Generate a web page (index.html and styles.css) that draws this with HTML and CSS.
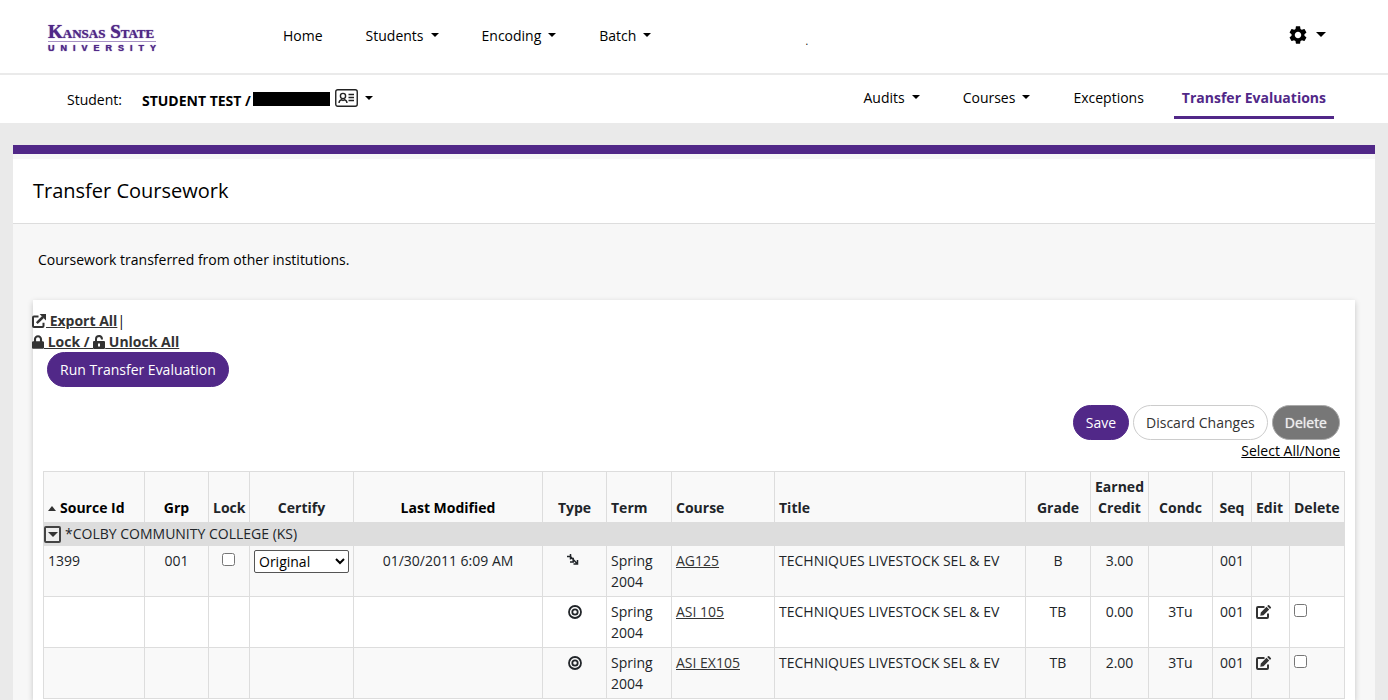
FILE: index.html
```html
<!DOCTYPE html>
<html lang="en">

<head>
    <meta charset="UTF-8">
    <meta name="viewport" content="width=device-width, initial-scale=1.0">
    <title>Transfer Coursework</title>
    <link rel="stylesheet" href="styles.css">
</head>

<body>
    <!-- shared icons -->
    <svg class="sprite" xmlns="http://www.w3.org/2000/svg" aria-hidden="true">
        <symbol id="icon-export" viewBox="0 0 14 14">
            <path d="M6.5 2.5H2Q1 2.5 1 3.5V12q0 1 1 1h8.500q1 0 1-1V8.800" fill="none" stroke="currentColor" stroke-width="2" />
            <path d="M4.800 9.200L11 3" fill="none" stroke="currentColor" stroke-width="2.500" />
            <path d="M7.600 0H14v6.400z" fill="currentColor" />
        </symbol>
        <symbol id="icon-lock" viewBox="0 0 448 512">
            <path fill="currentColor" d="M400 224h-24v-72C376 68.2 307.8 0 224 0S72 68.2 72 152v72H48c-26.5 0-48 21.5-48 48v192c0 26.5 21.5 48 48 48h352c26.5 0 48-21.5 48-48V272c0-26.5-21.5-48-48-48zm-104 0H152v-72c0-39.7 32.3-72 72-72s72 32.3 72 72v72z" />
        </symbol>
        <symbol id="icon-unlock" viewBox="0 0 12 14">
            <path d="M3 7V4q0-3 3.200-3Q9 1 9 4.500" fill="none" stroke="currentColor" stroke-width="2" />
            <path fill="currentColor" fill-rule="evenodd" d="M1 6h10q1 0 1 1v6q0 1-1 1H1q-1 0-1-1V7q0-1 1-1zM5 8.500v3h2v-3z" />
        </symbol>
        <symbol id="icon-edit" viewBox="0 0 16 14">
            <path d="M8.500 2H2Q1 2 1 3v9q0 1 1 1h9q1 0 1-1V8.500" fill="none" stroke="currentColor" stroke-width="2" />
            <path d="M4.300 10.700l.5-3.200 5.700-5.700 2.700 2.700-5.700 5.700zM11.200 1.100l.8-.8q.6-.6 1.200 0l1.600 1.600q.6.600 0 1.200l-.8.8z" fill="currentColor" />
        </symbol>
        <symbol id="icon-target" viewBox="0 0 14 14">
            <circle cx="7" cy="7" r="6" fill="none" stroke="currentColor" stroke-width="1.800" />
            <circle cx="7" cy="7" r="2.700" fill="none" stroke="currentColor" stroke-width="1.800" />
        </symbol>
        <symbol id="icon-arrows" viewBox="0 0 16 14">
            <path d="M0 2.500h4.500M3.500 0v5.500M2.500 1.500l7.500 8M6.200 3.800v4.200H3M10.500 6v4H6.500" fill="none" stroke="currentColor" stroke-width="1.500" />
        </symbol>
    </svg>

    <header class="header">
        <a class="logo" href="#" aria-label="Kansas State University">
            <span class="logo-name">K<small>ANSAS</small> S<small>TATE</small></span>
            <span class="logo-sub">UNIVERSITY</span>
        </a>
        <nav class="nav">
            <a href="#">Home</a>
            <a href="#">Students<i class="caret"></i></a>
            <a href="#">Encoding<i class="caret"></i></a>
            <a href="#">Batch<i class="caret"></i></a>
        </nav>
        <span class="dot">.</span>
        <button class="settings" type="button" aria-label="Settings">
            <svg width="18" height="18" viewBox="2 2 20 20"><path d="M19.140 12.940c.04-.3.060-.610.060-.940 0-.320-.020-.640-.070-.940l2.030-1.580c.180-.140.230-.410.120-.610l-1.920-3.320c-.120-.220-.370-.290-.590-.220l-2.390.960c-.5-.380-1.030-.7-1.620-.940l-.360-2.540c-.040-.240-.240-.410-.480-.410h-3.840c-.240 0-.430.170-.470.410l-.360 2.540c-.590.240-1.130.570-1.620.940l-2.390-.960c-.220-.080-.470 0-.590.220L2.740 8.870c-.120.210-.080.470.120.610l2.030 1.580c-.050.3-.090.630-.090.940s.020.640.070.940l-2.030 1.580c-.180.140-.230.410-.120.610l1.920 3.320c.120.220.370.290.590.220l2.390-.960c.5.380 1.030.7 1.620.940l.360 2.540c.050.240.240.410.480.410h3.840c.240 0 .440-.170.470-.410l.360-2.540c.590-.240 1.130-.560 1.620-.940l2.390.960c.220.080.470 0 .590-.220l1.920-3.320c.120-.220.070-.470-.120-.610l-2.010-1.580zM12 15.600c-1.980 0-3.600-1.620-3.600-3.600s1.620-3.600 3.600-3.600 3.600 1.620 3.600 3.600-1.620 3.600-3.600 3.600z" /></svg>
            <i class="caret caret-lg"></i>
        </button>
    </header>

    <div class="subbar">
        <span class="student-label">Student:</span>
        <strong class="student-name">STUDENT TEST /</strong>
        <span class="redacted"></span>
        <button class="student-card" type="button" aria-label="Student details">
            <svg width="23" height="18" viewBox="0 0 23 18" fill="none" stroke="#222">
                <rect x=".75" y=".75" width="21.500" height="16.500" rx="2" stroke-width="1.400" />
                <circle cx="8" cy="7" r="2.600" stroke-width="1.400" />
                <path d="M4 14q.3-3 2.600-3.300l1.400.8 1.400-.8q2.300.3 2.600 3.300M13.500 5.500H19M13.500 8.500H19M13.500 11.500H19" stroke-width="1.400" />
            </svg>
            <i class="caret"></i>
        </button>
        <nav class="tabs">
            <a href="#">Audits<i class="caret"></i></a>
            <a href="#">Courses<i class="caret"></i></a>
            <a href="#">Exceptions</a>
            <a class="active" href="#">Transfer Evaluations</a>
        </nav>
    </div>

    <main class="main">
        <h1 class="title">Transfer Coursework</h1>
        <p class="intro">Coursework transferred from other institutions.</p>

        <section class="card">
            <div class="tools">
                <div><a href="#"><svg class="icon" width="14" height="14"><use href="#icon-export" /></svg> Export All</a>|</div>
                <div><a href="#"><svg class="icon" width="12" height="14"><use href="#icon-lock" /></svg> Lock / <svg class="icon" width="12" height="14"><use href="#icon-unlock" /></svg> Unlock All</a></div>
            </div>
            <button class="btn btn-primary btn-run" type="button">Run Transfer Evaluation</button>

            <div class="actions">
                <button class="btn btn-primary" type="button">Save</button>
                <button class="btn" type="button">Discard Changes</button>
                <button class="btn btn-disabled" type="button">Delete</button>
            </div>
            <div class="select-all"><a href="#">Select All/None</a></div>

            <table class="courses">
                <colgroup>
                    <col class="w-source">
                    <col class="w-mid">
                    <col class="w-lock">
                    <col class="w-certify">
                    <col class="w-modified">
                    <col class="w-mid">
                    <col class="w-term">
                    <col class="w-course">
                    <col>
                    <col class="w-term">
                    <col class="w-credit">
                    <col class="w-mid">
                    <col class="w-seq">
                    <col class="w-edit">
                    <col class="w-delete">
                </colgroup>
                <thead>
                    <tr>
                        <th class="sorted"><i class="sort-up"></i>Source Id</th>
                        <th class="center sorted">Grp</th>
                        <th class="center">Lock</th>
                        <th class="center">Certify</th>
                        <th class="center sorted">Last Modified</th>
                        <th class="center">Type</th>
                        <th>Term</th>
                        <th>Course</th>
                        <th>Title</th>
                        <th class="center">Grade</th>
                        <th class="center">Earned Credit</th>
                        <th class="center">Condc</th>
                        <th class="center">Seq</th>
                        <th>Edit</th>
                        <th>Delete</th>
                    </tr>
                </thead>
                <tbody>
                    <tr class="group">
                        <td colspan="15">
                            <div class="group-name">
                                <button class="toggle" type="button" aria-label="Collapse"><i class="caret caret-lg"></i></button>
                                *COLBY COMMUNITY COLLEGE (KS)
                            </div>
                        </td>
                    </tr>
                    <tr class="odd">
                        <td>1399</td>
                        <td class="center">001</td>
                        <td class="center"><input type="checkbox" aria-label="Lock"></td>
                        <td><select aria-label="Certify"><option>Original</option></select></td>
                        <td class="center">01/30/2011 6:09 AM</td>
                        <td class="center"><svg class="icon" width="16" height="14"><use href="#icon-arrows" /></svg></td>
                        <td>Spring 2004</td>
                        <td><a href="#">AG125</a></td>
                        <td>TECHNIQUES LIVESTOCK SEL &amp; EV</td>
                        <td class="center">B</td>
                        <td class="center">3.00</td>
                        <td></td>
                        <td class="center">001</td>
                        <td></td>
                        <td></td>
                    </tr>
                    <tr>
                        <td></td>
                        <td></td>
                        <td></td>
                        <td></td>
                        <td></td>
                        <td class="center"><svg class="icon" width="14" height="14"><use href="#icon-target" /></svg></td>
                        <td>Spring 2004</td>
                        <td><a href="#">ASI 105</a></td>
                        <td>TECHNIQUES LIVESTOCK SEL &amp; EV</td>
                        <td class="center">TB</td>
                        <td class="center">0.00</td>
                        <td class="center">3Tu</td>
                        <td class="center">001</td>
                        <td><a href="#" aria-label="Edit"><svg class="icon" width="16" height="14"><use href="#icon-edit" /></svg></a></td>
                        <td><input type="checkbox" aria-label="Delete"></td>
                    </tr>
                    <tr class="odd">
                        <td></td>
                        <td></td>
                        <td></td>
                        <td></td>
                        <td></td>
                        <td class="center"><svg class="icon" width="14" height="14"><use href="#icon-target" /></svg></td>
                        <td>Spring 2004</td>
                        <td><a href="#">ASI EX105</a></td>
                        <td>TECHNIQUES LIVESTOCK SEL &amp; EV</td>
                        <td class="center">TB</td>
                        <td class="center">2.00</td>
                        <td class="center">3Tu</td>
                        <td class="center">001</td>
                        <td><a href="#" aria-label="Edit"><svg class="icon" width="16" height="14"><use href="#icon-edit" /></svg></a></td>
                        <td><input type="checkbox" aria-label="Delete"></td>
                    </tr>
                </tbody>
            </table>
        </section>
    </main>
</body>

</html>
```
FILE: styles.css
```css
* {
    box-sizing: border-box;
}
body {
    display: flex;
    flex-direction: column;
    min-height: 100vh;
    margin: 0;
    background: #eaeaea;
    color: #000;
    font: 14px/21px "Open Sans", sans-serif;
}
a {
    color: inherit;
}
button {
    font: inherit;
    color: inherit;
}
.sprite {
    display: none;
}
.icon {
    vertical-align: -2px;
}
.caret {
    display: inline-block;
    margin-left: 7px;
    border: 4px solid transparent;
    border-top-color: currentColor;
    border-bottom: 0;
    vertical-align: 4px;
}
.caret-lg {
    border-width: 5px 5px 0;
}

/* top bar */
.header {
    display: flex;
    align-items: center;
    height: 75px;
    padding: 0 62px 2px 48px;
    background: #fff;
    border-bottom: 2px solid #eaeaea;
}
.logo {
    width: 110px;
    margin-top: 6px;
    color: #512888;
    text-decoration: none;
}
.logo-name {
    display: block;
    width: 108px;
    border-bottom: 1px solid #a692c4;
    font: bold 19px/15px "Liberation Serif", serif;
    text-shadow: 0 0 1px #512888;
    white-space: nowrap;
}
.logo-name small {
    font-size: 13px;
}
.logo-sub {
    display: block;
    margin-top: 2px;
    font: bold 9px/9px "Liberation Sans", sans-serif;
    letter-spacing: 6px;
    text-shadow: 0 0 1px #512888;
}
.nav {
    display: flex;
    gap: 43px;
    margin-left: 125px;
}
.nav a,
.tabs a {
    color: #000;
    text-decoration: none;
    white-space: nowrap;
}
.dot {
    margin: 10px 0 0 154px;
    font-size: 10px;
    line-height: 14px;
}
.settings {
    display: flex;
    align-items: center;
    margin-left: auto;
    padding: 0 0 2px;
    border: 0;
    background: none;
}
.settings .caret {
    margin-left: 9px;
}

/* student bar */
.subbar {
    display: flex;
    align-items: center;
    height: 48px;
    padding: 0 54px 0 67px;
    background: #fff;
}
.student-name {
    margin: 2px 2px 0 20px;
}
.redacted {
    width: 77px;
    height: 14px;
    background: #000;
}
.student-card {
    display: flex;
    align-items: center;
    margin-left: 5px;
    padding: 0 0 2px;
    border: 0;
    background: none;
}
.tabs {
    display: flex;
    gap: 22px;
    margin-left: auto;
}
.tabs a {
    padding: 7px 8px 8px;
    border-bottom: 3px solid transparent;
}
.tabs .caret {
    margin-right: 5px;
}
.tabs .active {
    border-color: #512888;
    color: #512888;
    font-weight: bold;
}

/* page */
.main {
    display: flex;
    flex: 1;
    flex-direction: column;
    margin: 22px 13px 0;
    padding-top: 5px;
    background: #f7f7f7;
    border-top: 9px solid #512888;
}
.title {
    margin: 0;
    padding: 17px 20px 17px;
    background: #fff;
    border-bottom: 1px solid #ddd;
    font-size: 20px;
    font-weight: normal;
    line-height: 30px;
}
.intro {
    margin: 25px 25px 30px;
}
.card {
    flex: 1;
    margin: 0 20px;
    padding: 10px;
    padding-bottom: 0;
    background: #fff;
    box-shadow: 0 2px 6px rgba(0, 0, 0, .2);
}
.tools {
    margin-left: -11px;
}
.tools a {
    color: #333;
    font-weight: bold;
}
.btn {
    height: 35px;
    padding: 0 12px;
    border: 1px solid #ccc;
    border-radius: 18px;
    background: #fff;
    color: #333;
}
.btn-primary {
    border-color: #512888;
    background: #512888;
    color: #fff;
}
.btn-disabled {
    border-color: #aaa;
    background: #777;
    color: #eee;
    text-shadow: 0 0 1px #eee;
}
.btn-run {
    margin-left: 4px;
}
.actions {
    display: flex;
    justify-content: flex-end;
    gap: 4px;
    margin: 18px 5px 0;
}
.select-all {
    margin: 0 5px 10px;
    text-align: right;
}

/* coursework table */
.courses {
    width: 100%;
    border-collapse: collapse;
    table-layout: fixed;
    color: #212529;
}
.courses th,
.courses td {
    padding: 4px;
    border: 1px solid #ddd;
    text-align: left;
    vertical-align: top;
}
.courses th {
    background: #f9f9f9;
    vertical-align: bottom;
}
.courses .sorted {
    color: #000;
}
.courses .center {
    text-align: center;
}
.courses .odd {
    background: #f9f9f9;
}
.courses a {
    color: #333;
}
.courses .group td {
    padding: 0;
    background: #ddd;
}
.group-name {
    display: flex;
    align-items: center;
    gap: 4px;
    height: 22px;
    line-height: 20px;
}
.toggle {
    display: flex;
    align-items: center;
    justify-content: center;
    width: 17px;
    height: 17px;
    padding: 0;
    border: 2px solid #444;
    border-radius: 2px;
    background: #eee;
    color: #333;
}
.toggle .caret {
    margin: 0;
}
.sort-up {
    display: inline-block;
    margin-right: 4px;
    border: 4px solid transparent;
    border-bottom: 5px solid #333;
    border-top: 0;
    vertical-align: 2px;
}
.courses input {
    width: 13px;
    height: 13px;
    margin: 3px 1px 0 0;
    vertical-align: top;
}
.courses select {
    display: block;
    width: 100%;
    height: 23px;
    padding: 0;
    border: 1px solid #555;
    border-radius: 2px;
    background-color: #fff;
    font: inherit;
}
.w-source {
    width: 101px;
}
.w-mid {
    width: 64px;
}
.w-term {
    width: 65px;
}
.w-lock {
    width: 41px;
}
.w-certify {
    width: 104px;
}
.w-modified {
    width: 189px;
}
.w-course {
    width: 103px;
}
.w-credit {
    width: 58px;
}
.w-seq {
    width: 39px;
}
.w-edit {
    width: 38px;
}
.w-delete {
    width: 55px;
}
```
